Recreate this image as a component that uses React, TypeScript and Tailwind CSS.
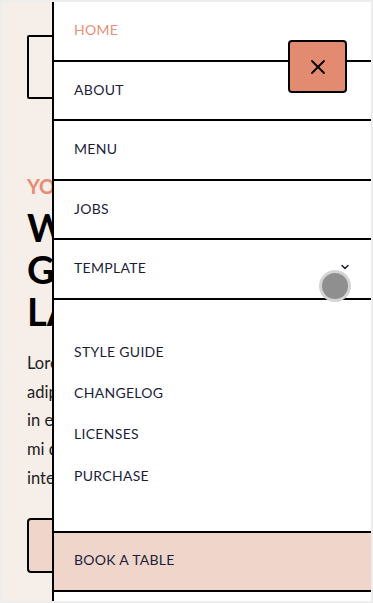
import { X, ChevronDown } from 'lucide-react'

const links = ['ABOUT', 'MENU', 'JOBS']
const subLinks = ['STYLE GUIDE', 'CHANGELOG', 'LICENSES', 'PURCHASE']

export default function App() {
  return (
    <div className="w-[373px] h-[603px] border-2 border-[#ededed] bg-white relative overflow-hidden font-['Lato',sans-serif]">
      {/* page behind the menu */}
      <div className="h-full bg-[#f6eee8] px-[25px] pt-[33px]">
        <div className="w-[64px] h-[64px] border-2 border-black rounded-[2px]" />
        <p className="mt-[73px] text-[20px] leading-[28px] font-bold text-[#e78c74] whitespace-nowrap">
          YOUR FAVORITE RESTAURANT
        </p>
        <h1 className="mt-[6px] text-[38px] leading-[42px] font-bold text-black whitespace-nowrap">
          <span className="block">WELCOME TO</span>
          <span className="block">GREAT</span>
          <span className="block">LAKES</span>
        </h1>
        <div className="mt-[17px] text-[16.5px] leading-[28.7px] text-[#222] whitespace-nowrap">
          <p>Lorem ipsum dolor sit amet, consectetur</p>
          <p>adipiscing elit. Suspendisse varius enim</p>
          <p>in eros elementum tristique. Duis cursus,</p>
          <p>mi quis viverra ornare, eros dolor</p>
          <p>interdum nulla, ut commodo diam libero.</p>
        </div>
        <div className="mt-[25px] w-[140px] h-[55px] bg-[#f0d5ca] border-2 border-black rounded-[4px]" />
      </div>

      {/* mobile nav overlay */}
      <nav className="absolute top-0 bottom-0 left-[50px] right-0 bg-white border-l-2 border-black flex flex-col text-[14px] tracking-[0.3px] text-[#1c1d3d]">
        <a className="shrink-0 h-[59.5px] flex items-center pl-[20px] pb-[2px] border-b-2 border-black text-[#e8907a]">HOME</a>
        {links.map((l) => (
          <a key={l} className="shrink-0 h-[59.5px] flex items-center pl-[20px] pb-[2px] border-b-2 border-black">
            {l}
          </a>
        ))}
        <div className="shrink-0 h-[59.5px] flex items-center justify-between pl-[20px] pr-[20px] pb-[2px] border-b-2 border-black">
          <span>TEMPLATE</span>
          <ChevronDown className="w-[12px] h-[12px] -mt-[1px]" strokeWidth={3} />
        </div>
        <div className="shrink-0 h-[233px] border-b-2 border-black pt-[31px] pl-[20px] flex flex-col">
          {subLinks.map((s) => (
            <a key={s} className="h-[41.3px] flex items-center">
              {s}
            </a>
          ))}
        </div>
        <a className="shrink-0 h-[59px] flex items-center pl-[20px] pb-[3px] bg-[#f0d5ca] border-b-2 border-black">BOOK A TABLE</a>
      </nav>

      {/* close button */}
      <button className="absolute left-[286px] top-[38px] w-[59px] h-[53px] bg-[#e38b71] border-2 border-black rounded-[4px] flex items-center justify-center">
        <X className="w-[24px] h-[24px] text-black" strokeWidth={1.8} />
      </button>

      {/* touch indicator */}
      <div className="absolute left-[317px] top-[268px] w-[32px] h-[32px] rounded-full bg-[#d4d4d4] flex items-center justify-center">
        <div className="w-[26px] h-[26px] rounded-full bg-[#8f8f8f]" />
      </div>
    </div>
  )
}
